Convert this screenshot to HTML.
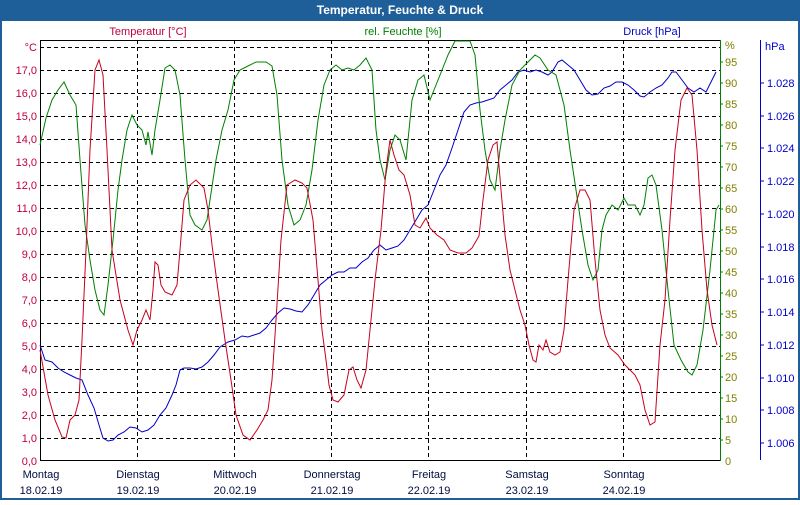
<!DOCTYPE html>
<html><head><meta charset="utf-8"><style>
body{margin:0;width:800px;height:500px;overflow:hidden;background:#fff;font-family:"Liberation Sans",sans-serif}
</style></head><body>
<svg width="800" height="500" xmlns="http://www.w3.org/2000/svg" font-family="Liberation Sans, sans-serif" font-size="11">
<rect x="0" y="0" width="800" height="500" fill="#1f5f99"/>
<rect x="2" y="21" width="796" height="477" fill="#fff"/>
<text x="400" y="14" fill="#fff" font-weight="bold" font-size="12" text-anchor="middle">Temperatur, Feuchte &amp; Druck</text>
<text x="148" y="35" fill="#c0003c" text-anchor="middle">Temperatur [°C]</text>
<text x="403" y="35" fill="#008000" text-anchor="middle">rel. Feuchte [%]</text>
<text x="652" y="35" fill="#0000c8" text-anchor="middle">Druck [hPa]</text>
<g stroke="#000" stroke-dasharray="4,3" stroke-width="1">
<line x1="40" y1="47.5" x2="720" y2="47.5"/>
<line x1="40" y1="70.5" x2="720" y2="70.5"/><line x1="40" y1="93.5" x2="720" y2="93.5"/><line x1="40" y1="116.5" x2="720" y2="116.5"/><line x1="40" y1="139.5" x2="720" y2="139.5"/><line x1="40" y1="162.5" x2="720" y2="162.5"/><line x1="40" y1="185.5" x2="720" y2="185.5"/><line x1="40" y1="208.5" x2="720" y2="208.5"/><line x1="40" y1="231.5" x2="720" y2="231.5"/><line x1="40" y1="254.5" x2="720" y2="254.5"/><line x1="40" y1="277.5" x2="720" y2="277.5"/><line x1="40" y1="300.5" x2="720" y2="300.5"/><line x1="40" y1="323.5" x2="720" y2="323.5"/><line x1="40" y1="346.5" x2="720" y2="346.5"/><line x1="40" y1="369.5" x2="720" y2="369.5"/><line x1="40" y1="392.5" x2="720" y2="392.5"/><line x1="40" y1="415.5" x2="720" y2="415.5"/><line x1="40" y1="438.5" x2="720" y2="438.5"/>
<line x1="137.5" y1="40" x2="137.5" y2="460"/><line x1="234.5" y1="40" x2="234.5" y2="460"/><line x1="331.5" y1="40" x2="331.5" y2="460"/><line x1="428.5" y1="40" x2="428.5" y2="460"/><line x1="526.5" y1="40" x2="526.5" y2="460"/><line x1="623.5" y1="40" x2="623.5" y2="460"/>
</g>
<line x1="40.5" y1="40" x2="40.5" y2="461" stroke="#000"/>
<line x1="40" y1="40.5" x2="720" y2="40.5" stroke="#000"/>
<line x1="40" y1="460.5" x2="720" y2="460.5" stroke="#000"/>
<line x1="720.5" y1="40" x2="720.5" y2="461" stroke="#008000"/>
<line x1="760.5" y1="40" x2="760.5" y2="460" stroke="#0000c8"/>
<g fill="#c0003c" text-anchor="end">
<text x="37" y="51">°C</text><text x="37" y="74">17,0</text><text x="37" y="97">16,0</text><text x="37" y="120">15,0</text><text x="37" y="143">14,0</text><text x="37" y="166">13,0</text><text x="37" y="189">12,0</text><text x="37" y="212">11,0</text><text x="37" y="235">10,0</text><text x="37" y="258">9,0</text><text x="37" y="281">8,0</text><text x="37" y="304">7,0</text><text x="37" y="327">6,0</text><text x="37" y="350">5,0</text><text x="37" y="373">4,0</text><text x="37" y="396">3,0</text><text x="37" y="419">2,0</text><text x="37" y="442">1,0</text><text x="37" y="465">0,0</text>
</g>
<g fill="#808000" stroke="none">
<text x="725" y="49">%</text><text x="725" y="66">95</text><text x="725" y="87">90</text><text x="725" y="108">85</text><text x="725" y="129">80</text><text x="725" y="150">75</text><text x="725" y="171">70</text><text x="725" y="192">65</text><text x="725" y="213">60</text><text x="725" y="234">55</text><text x="725" y="255">50</text><text x="725" y="276">45</text><text x="725" y="297">40</text><text x="725" y="318">35</text><text x="725" y="339">30</text><text x="725" y="360">25</text><text x="725" y="381">20</text><text x="725" y="402">15</text><text x="725" y="423">10</text><text x="725" y="444">5</text><text x="725" y="465">0</text>
</g>
<g stroke="#008000"><line x1="720" y1="62" x2="723" y2="62"/><line x1="720" y1="83" x2="723" y2="83"/><line x1="720" y1="104" x2="723" y2="104"/><line x1="720" y1="125" x2="723" y2="125"/><line x1="720" y1="146" x2="723" y2="146"/><line x1="720" y1="167" x2="723" y2="167"/><line x1="720" y1="188" x2="723" y2="188"/><line x1="720" y1="209" x2="723" y2="209"/><line x1="720" y1="230" x2="723" y2="230"/><line x1="720" y1="251" x2="723" y2="251"/><line x1="720" y1="272" x2="723" y2="272"/><line x1="720" y1="293" x2="723" y2="293"/><line x1="720" y1="314" x2="723" y2="314"/><line x1="720" y1="335" x2="723" y2="335"/><line x1="720" y1="356" x2="723" y2="356"/><line x1="720" y1="377" x2="723" y2="377"/><line x1="720" y1="398" x2="723" y2="398"/><line x1="720" y1="419" x2="723" y2="419"/><line x1="720" y1="440" x2="723" y2="440"/></g>
<g fill="#0000c8">
<text x="765" y="50">hPa</text><text x="767" y="87">1.028</text><text x="767" y="120">1.026</text><text x="767" y="152">1.024</text><text x="767" y="185">1.022</text><text x="767" y="218">1.020</text><text x="767" y="251">1.018</text><text x="767" y="283">1.016</text><text x="767" y="316">1.014</text><text x="767" y="349">1.012</text><text x="767" y="382">1.010</text><text x="767" y="414">1.008</text><text x="767" y="447">1.006</text>
</g>
<g stroke="#0000c8"><line x1="760" y1="83" x2="764" y2="83"/><line x1="760" y1="116" x2="764" y2="116"/><line x1="760" y1="148" x2="764" y2="148"/><line x1="760" y1="181" x2="764" y2="181"/><line x1="760" y1="214" x2="764" y2="214"/><line x1="760" y1="247" x2="764" y2="247"/><line x1="760" y1="279" x2="764" y2="279"/><line x1="760" y1="312" x2="764" y2="312"/><line x1="760" y1="345" x2="764" y2="345"/><line x1="760" y1="378" x2="764" y2="378"/><line x1="760" y1="410" x2="764" y2="410"/><line x1="760" y1="443" x2="764" y2="443"/></g>
<g fill="#000d40" text-anchor="middle">
<text x="41" y="478">Montag</text><text x="41" y="494">18.02.19</text>
<text x="138" y="478">Dienstag</text><text x="138" y="494">19.02.19</text>
<text x="235" y="478">Mittwoch</text><text x="235" y="494">20.02.19</text>
<text x="332" y="478">Donnerstag</text><text x="332" y="494">21.02.19</text>
<text x="429" y="478">Freitag</text><text x="429" y="494">22.02.19</text>
<text x="527" y="478">Samstag</text><text x="527" y="494">23.02.19</text>
<text x="624" y="478">Sonntag</text><text x="624" y="494">24.02.19</text>
</g>
<g fill="none" stroke-width="1">
<polyline stroke="#0000c8" points="40,345 45,360 52,362 58,368 64,372 70,375 76,378 82,380 88,395 94,408 99,425 103,438 108,441 113,440 118,435 124,432 130,427 136,428 142,432 148,430 154,425 160,415 166,408 172,395 176,385 180,370 184,368 190,368 196,369 202,367 208,362 214,355 220,347 228,342 235,340 242,336 248,337 254,335 260,333 266,328 272,320 278,313 284,308 290,309 296,311 302,312 308,305 314,295 320,285 326,280 332,275 338,272 344,272 350,268 356,268 362,262 368,258 374,250 380,245 386,250 392,248 398,246 404,240 410,230 416,220 422,210 428,205 434,190 440,175 446,165 452,148 458,130 464,112 470,105 476,103 482,102 488,100 494,98 500,90 506,85 512,80 518,72 524,70 530,72 536,70 542,72 548,75 552,72 558,62 562,60 568,65 574,70 580,80 586,90 592,95 598,94 604,88 610,86 616,82 622,82 628,85 634,90 640,96 644,97 650,92 656,88 662,85 668,78 672,72 676,72 682,80 688,88 694,92 700,88 706,92 712,80 716,72"/>
<polyline stroke="#008000" points="40,145 46,118 52,100 58,90 64,82 70,95 76,105 80,160 85,225 90,260 95,290 100,310 104,315 108,285 113,240 118,190 122,160 127,130 132,115 137,125 142,130 146,145 148,132 152,155 155,130 160,100 165,68 170,65 175,70 180,95 185,160 190,215 195,225 202,230 207,220 210,200 216,160 222,130 228,110 234,80 240,70 248,66 256,62 266,62 272,66 277,95 282,160 288,205 294,225 300,220 306,205 312,170 318,120 324,85 330,70 336,65 342,70 348,68 354,70 360,65 366,58 372,70 376,130 380,160 385,180 390,150 395,135 400,140 406,160 412,100 418,80 424,75 430,100 436,85 442,70 448,55 455,41 470,41 475,55 480,110 485,150 490,180 495,190 500,150 505,120 512,85 520,70 528,62 535,55 540,58 548,70 556,75 564,105 570,150 576,190 582,230 588,265 593,280 598,270 602,230 606,215 612,205 618,210 624,198 628,205 635,205 640,215 644,205 648,178 652,175 656,185 662,230 668,290 674,345 681,360 688,372 692,375 697,365 703,330 710,270 716,210 719,205"/>
<polyline stroke="#c8001e" points="40,350 48,395 55,420 62,437 66,438 70,420 75,415 79,400 82,340 86,250 90,150 95,70 99,60 103,75 107,150 112,250 120,300 128,330 133,345 137,330 142,320 146,310 150,320 153,290 155,262 158,265 161,285 165,292 172,295 177,285 180,250 184,200 190,185 196,180 204,188 208,210 212,245 218,290 225,340 231,380 236,415 243,435 250,440 257,430 263,420 268,410 272,380 276,320 281,240 287,185 295,180 302,183 307,188 313,220 318,280 322,330 326,360 329,385 333,400 338,402 344,395 349,370 353,367 357,380 361,388 366,370 370,330 375,280 381,230 386,170 390,140 394,155 399,170 404,175 410,195 415,225 420,228 426,218 430,228 437,235 444,240 450,250 458,253 466,253 472,248 479,236 483,200 488,160 493,145 497,142 501,190 505,235 510,270 515,290 520,310 525,325 529,345 533,360 536,362 539,345 543,350 546,340 550,352 555,355 560,352 564,330 568,280 574,210 580,190 585,190 590,200 595,260 600,310 605,335 610,348 618,355 625,365 630,370 635,375 640,385 645,410 650,425 655,422 660,345 665,300 670,220 675,150 681,100 687,88 692,95 697,150 702,230 707,290 712,325 717,345"/>
</g>
</svg>
</body></html>
